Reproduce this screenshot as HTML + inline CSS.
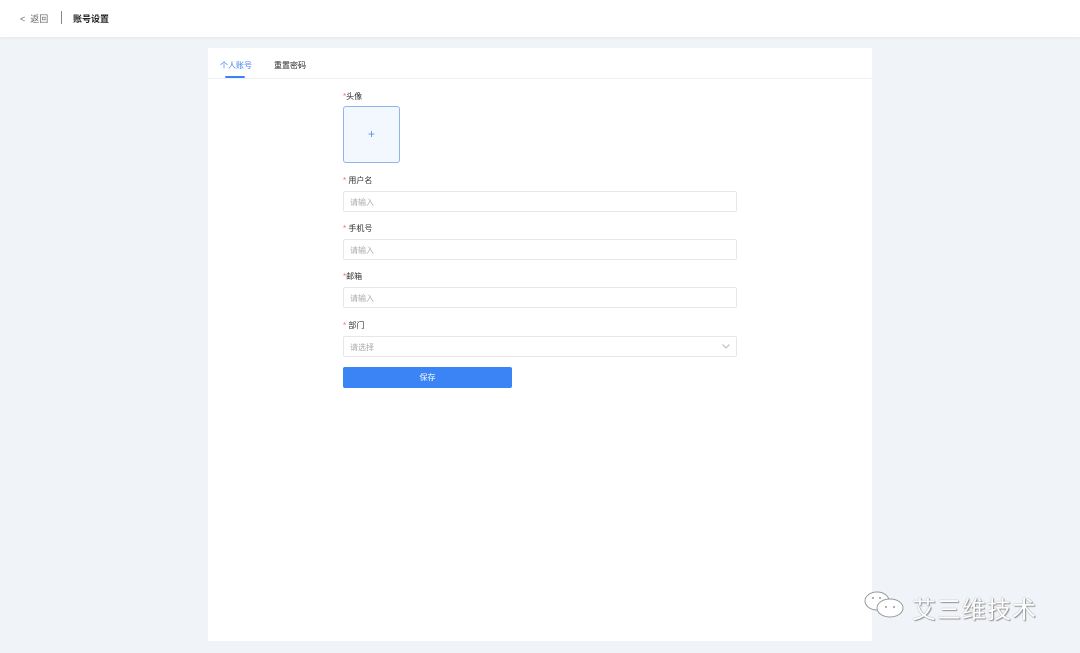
<!DOCTYPE html>
<html><head><meta charset="utf-8"><style>
*{margin:0;padding:0;box-sizing:border-box}
body{width:1080px;height:653px;background:#f0f3f8;font-family:"Liberation Sans","Noto Sans CJK SC",sans-serif;position:relative;overflow:hidden;color:#333}
.top{position:absolute;left:0;top:0;width:1080px;height:37px;background:#fff;box-shadow:0 1px 3px rgba(0,0,0,.05)}
.top .back{position:absolute;left:20px;top:12px;font-size:9px;color:#666}
.top .sep{position:absolute;left:61px;top:11px;width:1px;height:13px;background:#888}
.top .title{position:absolute;left:73px;top:12px;font-size:9px;font-weight:bold;color:#222}
.card{position:absolute;left:208px;top:48px;width:664px;height:593px;background:#fff}
.tabs{height:31px;border-bottom:1px solid #eef0f3;position:relative}
.tab{position:absolute;top:12px;font-size:8px}
.t1{left:12px;color:#3b82f6}.t2{left:66px;color:#222}
.ink{position:absolute;left:17px;top:28px;width:20px;height:2px;background:#3b82f6;border-radius:1px}
.lbl{position:absolute;left:343px;font-size:8px;color:#333}
.lbl b{color:#f56c6c;font-weight:normal}
.inp{position:absolute;left:343px;width:394px;height:21px;border:1px solid #e4e7ed;border-radius:2px;font-size:8px;color:#aaa;padding:5px 6px}
.up{position:absolute;left:343px;top:106px;width:57px;height:57px;border:1px solid #8fb4ee;border-radius:3px;background:#f3f7fe;color:#5b8de8;text-align:center;line-height:55px;font-size:12px}
.btn{position:absolute;left:343px;top:367px;width:169px;height:21px;background:#3a84f5;border-radius:2px;color:#fff;font-size:8px;text-align:center;line-height:21px}
.wm{position:absolute;left:912px;top:590px;font-size:24px;color:#fff;text-shadow:0 0 1px #777,1px 1px 1px #999;letter-spacing:1px}
</style></head><body>
<div class="top"><span class="back">&lt;&nbsp; 返回</span><div class="sep"></div><span class="title">账号设置</span></div>
<div class="card"><div class="tabs"><span class="tab t1">个人账号</span><span class="tab t2">重置密码</span><div class="ink"></div></div></div>
<div class="lbl" style="top:91px"><b>*</b>头像</div>
<div class="up">+</div>
<div class="lbl" style="top:175px"><b>*</b> 用户名</div>
<div class="inp" style="top:191px">请输入</div>
<div class="lbl" style="top:223px"><b>*</b> 手机号</div>
<div class="inp" style="top:239px">请输入</div>
<div class="lbl" style="top:271px"><b>*</b>邮箱</div>
<div class="inp" style="top:287px">请输入</div>
<div class="lbl" style="top:320px"><b>*</b> 部门</div>
<div class="inp" style="top:336px">请选择<svg style="position:absolute;right:6px;top:7px" width="8" height="5" viewBox="0 0 8 5"><path d="M0.5 0.5L4 4L7.5 0.5" fill="none" stroke="#bbb" stroke-width="1"/></svg></div>
<div class="btn">保存</div>
<svg style="position:absolute;left:862px;top:590px" width="46" height="30" viewBox="0 0 46 30"><ellipse cx="15" cy="11" rx="12" ry="9" fill="#fff" stroke="#999" stroke-width="1"/><ellipse cx="28" cy="18" rx="13" ry="9" fill="#fff" stroke="#999" stroke-width="1"/><circle cx="24" cy="17" r="1" fill="#999"/><circle cx="32" cy="17" r="1" fill="#999"/><circle cx="11" cy="8" r="1" fill="#999"/><circle cx="18" cy="8" r="1" fill="#999"/></svg>
<div class="wm">艾三维技术</div>
</body></html>
